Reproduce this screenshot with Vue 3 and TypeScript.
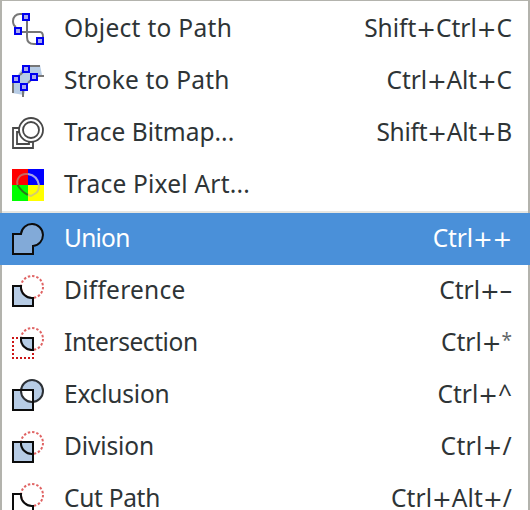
<script setup lang="ts">
type Icon = 'object' | 'stroke' | 'trace' | 'pixel' | 'union' | 'difference' | 'intersection' | 'exclusion' | 'division' | 'cut'

interface Item {
  icon: Icon
  label: string
  keys: string
  tracking: number
  keyTracking?: number
  active?: boolean
}

const groups: Item[][] = [
  [
    { icon: 'object', label: 'Object to Path', keys: 'Shift+Ctrl+C', tracking: 0.3 },
    { icon: 'stroke', label: 'Stroke to Path', keys: 'Ctrl+Alt+C', tracking: 0.22, keyTracking: -0.1 },
    { icon: 'trace', label: 'Trace Bitmap...', keys: 'Shift+Alt+B', tracking: 0, keyTracking: -0.25 },
    { icon: 'pixel', label: 'Trace Pixel Art...', keys: '', tracking: 0.22 },
  ],
  [
    { icon: 'union', label: 'Union', keys: 'Ctrl++', tracking: -0.75, keyTracking: -0.15, active: true },
    { icon: 'difference', label: 'Difference', keys: 'Ctrl+–', tracking: 0.25 },
    { icon: 'intersection', label: 'Intersection', keys: 'Ctrl+*', tracking: -0.42 },
    { icon: 'exclusion', label: 'Exclusion', keys: 'Ctrl+^', tracking: -0.2 },
    { icon: 'division', label: 'Division', keys: 'Ctrl+/', tracking: -0.12, keyTracking: 0.3 },
    { icon: 'cut', label: 'Cut Path', keys: 'Ctrl+Alt+/', tracking: -0.3, keyTracking: 0.1 },
  ],
]

const nodes: Partial<Record<Icon, [number, number][]>> = {
  object: [[5, 0], [1, 7], [12, 12]],
  stroke: [[5, 0], [0, 5], [9, 4], [4, 9]],
}

const keyParts = (keys: string): string[] => keys.split(/([+*])/).filter(Boolean)
</script>

<template>
  <div class="menu" role="menu">
    <div v-for="(group, g) in groups" :key="g" class="group">
      <div v-for="item in group" :key="item.label" class="item" :class="{ active: item.active }" role="menuitem">
        <svg class="icon" viewBox="0 0 16 16" fill="none">
          <template v-if="item.icon === 'object'">
            <path class="wire" d="M5 .5H4C2 .5 .5 2 .5 4C.5 5.500 1 6.500 2 7M7.500 4V12Q7.500 15.500 11 15.500H12M5 9.500H14Q15.500 9.500 15.500 12" />
          </template>
          <template v-else-if="item.icon === 'stroke'">
            <path class="pale" d="M0 14V9L5 2 9 0H14L15 5H13L8 9 6 15Z" />
            <path class="wire" d="M8 .5H14M13 5.500H16M.5 9V14M5.500 13V16M4 5L6 3M8 9L10 7" />
          </template>
          <template v-else-if="item.icon === 'trace'">
            <path class="trace" d="M4 5.500H.5V15.500H10.500V12.500M4 7.500H2.500V13.500H8.500V12" />
            <circle class="trace" cx="9.500" cy="6.500" r="6" />
            <circle class="trace" cx="9.500" cy="6.500" r="4" />
          </template>
          <template v-else-if="item.icon === 'pixel'">
            <path fill="#f00" d="M0 0H8V8H0Z" />
            <path fill="#00f" d="M8 0H16V8H8Z" />
            <path fill="#0f0" d="M0 8H8V16H0Z" />
            <path fill="#ff0" d="M8 8H16V16H8Z" />
            <path stroke="#c4675e" d="M2.800 8C2 5 4 2.500 7 2.500H8" />
            <path stroke="#a5a2ea" d="M8 2.500C11 3 13 5 13.500 8" />
            <path stroke="#287c16" d="M2.800 8C4 10 6 12 8 13" />
            <path stroke="#d4cb70" d="M8 13L9.500 13.500 12 12Q13.500 11 13.500 8" />
          </template>
          <template v-else-if="item.icon === 'union'">
            <path class="line joined" d="M.5 5.500H4.500A5.500 5.500 0 1 1 10.500 11.500V15.500H.5Z" />
          </template>
          <template v-else-if="item.icon === 'difference'">
            <circle class="dots" cx="10" cy="6" r="5.500" />
            <path class="line pale" d="M.5 5.500H4.500A5.500 5.500 0 0 0 10.500 11.500V15.500H.5Z" />
          </template>
          <template v-else-if="item.icon === 'intersection'">
            <circle class="dots" cx="10" cy="6" r="5.500" />
            <path class="square-dots" d="M0 5.500H5M.5 7V16M2 15.500H11M10.500 13V15" />
            <path class="line pale" d="M4.500 5.500H10.500V11.500A5.500 5.500 0 0 1 4.500 5.500Z" />
          </template>
          <template v-else-if="item.icon === 'exclusion'">
            <circle class="pale" cx="10" cy="6" r="5.500" />
            <path class="pale" d="M.5 5.500H10.500V15.500H.5Z" />
            <path fill="#fff" d="M4.500 5.500H10.500V11.500A5.500 5.500 0 0 1 4.500 5.500Z" />
            <circle class="line soft" cx="10" cy="6" r="5.500" />
            <path class="line" d="M.5 5.500H10.500V15.500H.5Z" />
          </template>
          <template v-else-if="item.icon === 'division'">
            <circle class="dots" cx="10" cy="6" r="5.500" />
            <path class="line pale" d="M.5 5.500H10.500V15.500H.5Z" />
            <path class="line" d="M4.500 5.500A5.500 5.500 0 0 0 10.500 11.500" />
          </template>
          <template v-else>
            <circle class="dots" cx="10" cy="6" r="5.500" />
            <path class="line cut" d="M.5 16V5.500H4.500A5.500 5.500 0 0 0 10.500 11.500V16" />
          </template>
          <g v-for="([x, y], n) in nodes[item.icon] ?? []" :key="n">
            <rect class="node" :x="x + 0.5" :y="y + 0.5" width="3" height="3" />
          </g>
        </svg>
        <span class="label" :style="{ letterSpacing: item.tracking + 'px' }">{{ item.label }}</span>
        <span class="keys" :style="{ letterSpacing: (item.keyTracking ?? 0) + 'px' }"><span v-for="(part, p) in keyParts(item.keys)" :key="p" :class="{ plus: part === '+', star: part === '*' }">{{ part }}</span></span>
      </div>
    </div>
  </div>
</template>

<style>
body {
  overflow: hidden;
}
</style>

<style scoped>
.menu {
  box-sizing: border-box;
  width: 530px;
  height: 510px;
  overflow: hidden;
  padding: 2px 0 0;
  background:
    linear-gradient(#b3b3ad, #b3b3ad) 0 0 / 100% 1px no-repeat,
    linear-gradient(#b3b3ad, #b3b3ad) 0 0 / 2px 100% no-repeat,
    linear-gradient(#b3b3ad, #b3b3ad) 100% 0 / 2px 100% no-repeat,
    #fff;
  font: 24.5px/50px "Noto Sans", sans-serif;
  color: #2e3436;
}
.group {
  padding-top: 1px;
}
.group + .group {
  margin: 0 2px;
  border-top: 2px solid #e6e6e2;
  padding-top: 0;
}
.group + .group .item {
  margin: 0 -2px;
}
.item {
  display: flex;
  align-items: center;
  height: 52px;
  padding: 0 18px 0 12px;
  white-space: pre;
}
.active {
  background: #4a90d9;
  color: #fff;
}
.icon {
  flex: none;
  width: 32px;
  height: 32px;
  margin-right: 20px;
}
.label {
  flex: 1;
}
.label,
.keys {
  height: 52px;
}
.plus {
  font-family: "DejaVu Sans", sans-serif;
  font-size: 23.5px;
  line-height: 0;
}
.star {
  font-size: 19px;
  line-height: 0;
  vertical-align: 4px;
  opacity: 0.75;
}
.wire {
  stroke: #777;
}
.pale {
  fill: #b7cce5;
}
.trace {
  stroke: #484848;
  stroke-width: 0.9;
}
.line {
  stroke: #0c0c0c;
}
.soft {
  stroke: #2c3035;
}
.cut {
  fill: #fff;
}
.joined {
  fill: #82aad8;
}
.dots {
  stroke: #e06464;
  stroke-dasharray: 1.2 0.95;
}
.square-dots {
  stroke: #cc1515;
  stroke-dasharray: 1 1;
}
.node {
  fill: #a9a9ee;
  stroke: #0000f0;
}
</style>
